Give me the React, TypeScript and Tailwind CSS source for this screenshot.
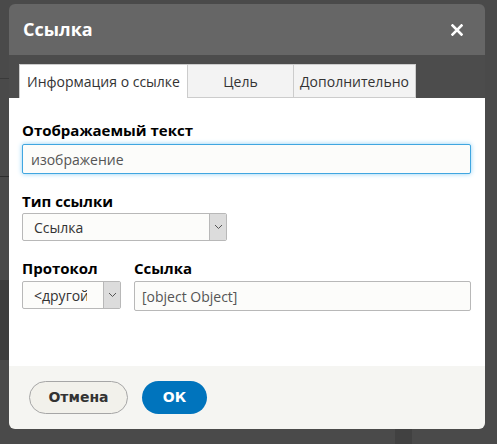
import React from 'react';

const font = { fontFamily: '"Open Sans", "DejaVu Sans", sans-serif' };

function SelectBox({ value, width, textWidth }: { value: string; width: string; textWidth?: string }) {
  return (
    <div className={`flex h-[28px] ${width} border border-[#b8b8b8] rounded-[2px] bg-[#fcfcfa] overflow-hidden`}>
      <div className="flex-1 flex items-center pl-[11px] text-[14px] text-[#333] overflow-hidden whitespace-nowrap">
        <span className={`block overflow-hidden ${textWidth ?? ''}`}>{value}</span>
      </div>
      <div className="w-[17px] flex items-center justify-center bg-[#dcdcdc] border-l border-[#b8b8b8]">
        <svg width="9" height="6" viewBox="0 0 9 6">
          <path d="M1 1 L4.5 4.5 L8 1" fill="none" stroke="#555" strokeWidth="1" />
        </svg>
      </div>
    </div>
  );
}

export default function App() {
  return (
    <div className="relative w-[497px] h-[444px] bg-[#4a4a4a] overflow-hidden" style={font}>
      {/* page behind the overlay */}
      <div className="absolute left-0 top-[78px] w-[9px] h-px bg-[#3a3a3a]" />
      <div className="absolute left-0 top-[176px] w-[9px] h-px bg-[#2e2e2e]" />
      <div className="absolute left-0 top-[280px] w-[9px] h-[80px] bg-[#3d3d3d]" />
      <div className="absolute left-[395px] top-[428px] w-[17px] h-[16px] bg-[#414141]" />

      <div className="absolute left-[9px] top-[4px] w-[476px] flex flex-col rounded-[6px] overflow-hidden">
        {/* title */}
        <div className="h-[51px] bg-[#666666] flex items-center justify-between pl-[14px] pr-[22px]">
          <span className="text-white text-[18px] font-bold">Ссылка</span>
          <svg width="12" height="12" viewBox="0 0 12 12">
            <path d="M1.5 1.5 L10.5 10.5 M10.5 1.5 L1.5 10.5" stroke="#fff" strokeWidth="2.6" strokeLinecap="square" />
          </svg>
        </div>

        {/* tabs */}
        <div className="h-[43px] bg-[#4c4c4c] flex items-end pl-[10px]">
          <div className="h-[34px] w-[168px] bg-white border-t border-l border-[#ccc] flex items-center justify-center text-[14px] text-[#333]">
            Информация о ссылке
          </div>
          <div className="h-[34px] w-[107px] bg-[#f3f3f3] border border-[#ccc] flex items-center justify-center text-[14px] text-[#333]">
            Цель
          </div>
          <div className="h-[34px] w-[122px] bg-[#f3f3f3] border border-l-0 border-[#ccc] flex items-center justify-center text-[14px] text-[#333]">
            Дополнительно
          </div>
        </div>

        {/* body */}
        <div className="bg-white h-[268px] px-[13px] pt-[23px] flex flex-col">
          <label className="text-[15px] font-bold text-black leading-[19px]">Отображаемый текст</label>
          <div className="mt-[4px] h-[30px] w-[449px] border border-[#40a6e0] rounded-[2px] shadow-[0_0_5px_#8fd0f5] bg-[#fcfcfa] flex items-center pl-[8px] text-[14px] text-[#555]">
            изображение
          </div>

          <label className="mt-[18px] text-[15px] font-bold text-black leading-[19px]">Тип ссылки</label>
          <div className="mt-[2px]">
            <SelectBox value="Ссылка" width="w-[205px]" />
          </div>

          <div className="mt-[18px] flex gap-[13px]">
            <div className="flex flex-col">
              <label className="text-[15px] font-bold text-black leading-[19px]">Протокол</label>
              <div className="mt-[3px]">
                <SelectBox value="<другой>" width="w-[99px]" textWidth="w-[53px]" />
              </div>
            </div>
            <div className="flex flex-col">
              <label className="text-[15px] font-bold text-black leading-[19px]">Ссылка</label>
              <div className="mt-[3px] h-[30px] w-[337px] border border-[#b8b8b8] rounded-[2px] bg-[#fcfcfa] flex items-center pl-[7px] text-[14px] text-[#555]">
                [object Object]
              </div>
            </div>
          </div>
        </div>

        {/* footer */}
        <div className="h-[63px] bg-[#f5f5f2] flex items-center pl-[20px] gap-[14px]">
          <button
            className="h-[33px] w-[99px] rounded-full border border-[#a6a6a6] bg-[#f2f1eb] text-[14px] font-bold text-[#333]"
            style={{ fontFamily: '"DejaVu Sans", sans-serif' }}
          >
            Отмена
          </button>
          <button
            className="h-[33px] w-[65px] rounded-full bg-[#0074bd] text-[14px] font-bold text-white"
            style={{ fontFamily: '"DejaVu Sans", sans-serif' }}
          >
            ОК
          </button>
        </div>
      </div>
    </div>
  );
}
